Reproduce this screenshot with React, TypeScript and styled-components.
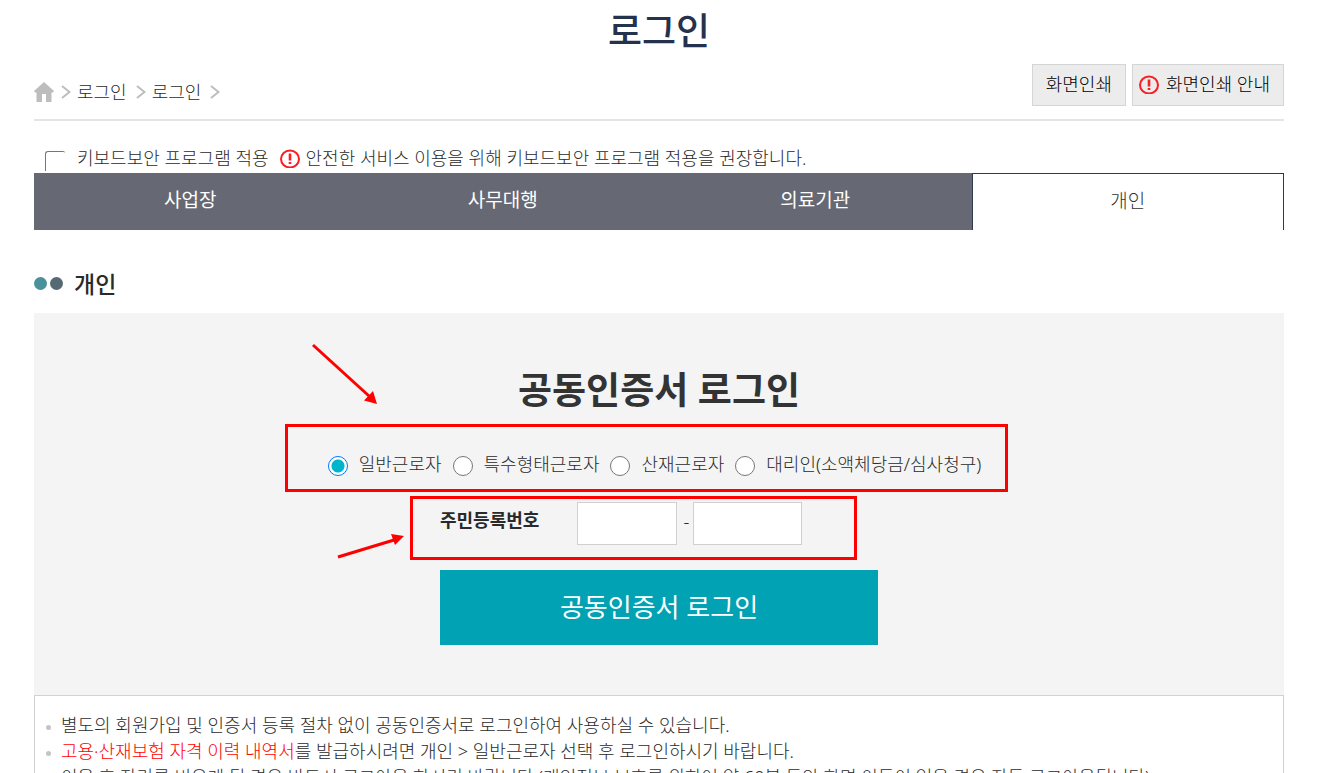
import React, { useState } from "react";
import styled, { createGlobalStyle } from "styled-components";

const GlobalStyle = createGlobalStyle`
  * { box-sizing: border-box; }
  body {
    margin: 0;
    background: #fff;
    color: #2a2a2a;
    font: 300 18px/26px "Noto Sans", "Noto Sans CJK KR", sans-serif;
  }
  button, input { font: inherit; }
  h1, h2, h3, ul, ol, p { margin: 0; padding: 0; }
  ul, ol { list-style: none; }
`;

const Page = styled.main`
  height: 100vh;
  overflow: hidden;
  padding: 0 59px 0 34px;
`;

const PageTitle = styled.h1`
  height: 64px;
  color: #24324d;
  font-size: 37px;
  font-weight: 500;
  line-height: 62px;
  text-align: center;
`;

const TopBar = styled.div`
  display: flex;
  align-items: flex-start;
  justify-content: space-between;
  height: 57px;
  border-bottom: 2px solid #e5e5e5;
`;

const Crumbs = styled.ol`
  display: flex;
  align-items: center;
  gap: 6px;
  padding-top: 15px;
`;

const Crumb = styled.li<{ $home?: boolean }>`
  display: flex;
  align-items: center;
  gap: ${(p) => (p.$home ? 7 : 9)}px;
`;

const CrumbLink = styled.a`
  display: flex;
  color: #2a2a2a;
  text-decoration: none;
`;

const Actions = styled.div`
  display: flex;
  gap: 6px;
`;

const PrintButton = styled.button<{ $icon?: boolean }>`
  display: flex;
  align-items: center;
  gap: 7px;
  height: 42px;
  padding: ${(p) => (p.$icon ? "0 13px 2px 6px" : "0 13px 2px")};
  border: 1px solid #d5d5d5;
  background: #ececec;
  color: #000;
`;

const SecurityRow = styled.div`
  display: flex;
  align-items: center;
  height: 52px;
  padding: 24px 0 2px 11px;
`;

const SecurityLabel = styled.label`
  display: flex;
  align-items: center;
  gap: 12px;
  margin-right: 11px;
`;

const Checkbox = styled.input`
  appearance: none;
  align-self: flex-end;
  width: 20px;
  height: 20px;
  margin: 0;
  border: solid #767676;
  border-width: 1px 0 0 1px;
  border-radius: 3px 2px 0 0;
  background: #fff;
  &:checked { background: #00b4cc; }
`;

const Notice = styled.p`
  display: flex;
  align-items: center;
  gap: 6px;
`;

const Tabs = styled.div`
  display: grid;
  grid-template-columns: repeat(4, 1fr);
  height: 57px;
  background: #666973;
`;

const Tab = styled.button<{ $active: boolean }>`
  padding: 0 0 3px;
  border: solid #2f3a4f;
  border-width: ${(p) => (p.$active ? "1px 1px 0" : "0")};
  background: ${(p) => (p.$active ? "#fff" : "#666973")};
  color: ${(p) => (p.$active ? "#333" : "#fff")};
  font-size: 19px;
  font-weight: ${(p) => (p.$active ? 300 : 400)};
`;

const SectionHead = styled.div`
  display: flex;
  align-items: center;
  height: 83px;
  padding-top: 24px;
  gap: 3px;
`;

const Dot = styled.span<{ $color: string }>`
  width: 13px;
  height: 13px;
  border-radius: 50%;
  background: ${(p) => p.$color};
`;

const SectionTitle = styled.h2`
  margin-left: 8px;
  font-size: 23px;
  font-weight: 500;
  line-height: 32px;
`;

const Panel = styled.form`
  display: flex;
  flex-direction: column;
  align-items: center;
  padding-bottom: 50px;
  background: #f4f4f4;
`;

const PanelTitle = styled.h3`
  padding-top: 49px;
  color: #333;
  font-size: 37px;
  font-weight: 700;
  line-height: 56px;
`;

const Highlight = styled.div`
  position: relative;
  display: flex;
  align-items: center;
  border: 3px solid #f00;
`;

const WorkerTypes = styled(Highlight)`
  gap: 11px;
  height: 68px;
  margin: 6px 25px 0 0;
  padding: 12px 24px 0 40px;
`;

const WorkerLabel = styled.label`
  display: flex;
  align-items: center;
  gap: 11px;
`;

const Radio = styled.input`
  appearance: none;
  width: 20px;
  height: 20px;
  margin: 3px 0 0;
  border: 1px solid #767676;
  border-radius: 50%;
  background: #fff;
  &:checked {
    border-color: #0075ff;
    background: radial-gradient(circle, #00b4cc 6px, #fff 7px);
  }
`;

const ResidentRow = styled(Highlight)`
  align-items: flex-start;
  width: 447px;
  height: 64px;
  margin: 4px 51px 0 0;
  padding: 3px 27px 0;
`;

const ResidentLabel = styled.label`
  width: 137px;
  padding-top: 5px;
  font-weight: 700;
`;

const NumberInput = styled.input<{ $width: number }>`
  width: ${(p) => p.$width}px;
  height: 43px;
  padding: 0 8px;
  border: 1px solid #d0d0d0;
  background: #fff;
`;

const Dash = styled.span`
  width: 16px;
  padding: 6px 0 0 3px;
  text-align: center;
`;

const LoginButton = styled.button`
  width: 35%;
  height: 75px;
  margin-top: 10px;
  padding: 0 0 2px;
  border: 0;
  background: #00a2b3;
  color: #fff;
  font-size: 26px;
  font-weight: 400;
`;

const Arrow = styled.svg<{ $left: number; $top: number }>`
  position: absolute;
  left: ${(p) => p.$left}px;
  top: ${(p) => p.$top}px;
  overflow: visible;
`;

const Notes = styled.ul`
  padding: 16px 11px;
  border: 1px solid #d0d3d5;
`;

const Note = styled.li`
  display: flex;
  gap: 10px;
  &::before {
    content: "";
    flex: none;
    width: 5px;
    height: 5px;
    margin-top: 13px;
    border-radius: 50%;
    background: #c4c4c4;
  }
`;

const Red = styled.strong`
  color: #f00;
  font-weight: 300;
`;

const HomeIcon = () => (
  <svg width="20" height="20" viewBox="0 0 20 20" fill="#bdbdbd" aria-label="홈">
    <path d="M10 0 20 9 19 10.500H17.500V20H12V12H8V20H2.500V10.500H1L0 9Z" />
  </svg>
);

const Chevron = () => (
  <svg width="10" height="14" viewBox="0 0 10 14" fill="none" stroke="#bdbdbd" strokeWidth="2" aria-hidden="true">
    <path d="M1 1 8.5 7 1 13" />
  </svg>
);

const AlertIcon = () => (
  <svg width="20" height="20" viewBox="0 0 20 20" fill="none" stroke="#f81e22" aria-hidden="true">
    <ellipse cx="10" cy="11" rx="9" ry="8.500" strokeWidth="2" />
    <path d="M10 5.500V12.500M10 14V16" strokeWidth="2.600" />
  </svg>
);

const tabs = ["사업장", "사무대행", "의료기관", "개인"];
const workers = ["일반근로자", "특수형태근로자", "산재근로자", "대리인(소액체당금/심사청구)"];

export default function App() {
  const [tab, setTab] = useState("개인");
  const [worker, setWorker] = useState(workers[0]);

  return (
    <>
      <GlobalStyle />
      <Page>
        <PageTitle>로그인</PageTitle>
        <TopBar>
          <Crumbs>
            <Crumb $home><CrumbLink href="#home"><HomeIcon /></CrumbLink><Chevron /></Crumb>
            <Crumb><CrumbLink href="#login">로그인</CrumbLink><Chevron /></Crumb>
            <Crumb><CrumbLink href="#login">로그인</CrumbLink><Chevron /></Crumb>
          </Crumbs>
          <Actions>
            <PrintButton type="button">화면인쇄</PrintButton>
            <PrintButton type="button" $icon><AlertIcon />화면인쇄 안내</PrintButton>
          </Actions>
        </TopBar>
        <SecurityRow>
          <SecurityLabel><Checkbox type="checkbox" />키보드보안 프로그램 적용</SecurityLabel>
          <Notice><AlertIcon />안전한 서비스 이용을 위해 키보드보안 프로그램 적용을 권장합니다.</Notice>
        </SecurityRow>
        <Tabs role="tablist">
          {tabs.map((name) => (
            <Tab key={name} type="button" role="tab" aria-selected={tab === name} $active={tab === name} onClick={() => setTab(name)}>
              {name}
            </Tab>
          ))}
        </Tabs>
        <SectionHead>
          <Dot $color="#4b919b" />
          <Dot $color="#566a73" />
          <SectionTitle>개인</SectionTitle>
        </SectionHead>
        <Panel onSubmit={(e) => e.preventDefault()}>
          <PanelTitle>공동인증서 로그인</PanelTitle>
          <WorkerTypes role="radiogroup" aria-label="근로자 구분">
            {workers.map((name) => (
              <WorkerLabel key={name}>
                <Radio type="radio" name="worker" checked={worker === name} onChange={() => setWorker(name)} />
                {name}
              </WorkerLabel>
            ))}
            <Arrow $left={24} $top={-83} width="68" height="62" aria-hidden="true">
              <path d="M1 1 57 52" stroke="#f00" strokeWidth="3" />
              <path d="M65 60 61 47 52 56.500Z" fill="#f00" />
            </Arrow>
          </WorkerTypes>
          <ResidentRow>
            <ResidentLabel htmlFor="resident-front">주민등록번호</ResidentLabel>
            <NumberInput id="resident-front" $width={100} maxLength={6} />
            <Dash>-</Dash>
            <NumberInput type="password" aria-label="주민등록번호 뒷자리" $width={109} maxLength={7} />
            <Arrow $left={-75} $top={36} width="68" height="26" aria-hidden="true">
              <path d="M0 22 56 5" stroke="#f00" strokeWidth="3" />
              <path d="M66 1 53 -1 57 10Z" fill="#f00" />
            </Arrow>
          </ResidentRow>
          <LoginButton type="submit">공동인증서 로그인</LoginButton>
        </Panel>
        <Notes>
          <Note><p>별도의 회원가입 및 인증서 등록 절차 없이 공동인증서로 로그인하여 사용하실 수 있습니다.</p></Note>
          <Note><p><Red>고용·산재보험 자격 이력 내역서</Red>를 발급하시려면 개인 &gt; 일반근로자 선택 후 로그인하시기 바랍니다.</p></Note>
          <Note><p>이용 후 자리를 비우게 될 경우 반드시 로그아웃 하시기 바랍니다.(개인정보 보호를 위하여 약 60분 동안 화면 이동이 없을 경우 자동 로그아웃됩니다)</p></Note>
        </Notes>
      </Page>
    </>
  );
}
